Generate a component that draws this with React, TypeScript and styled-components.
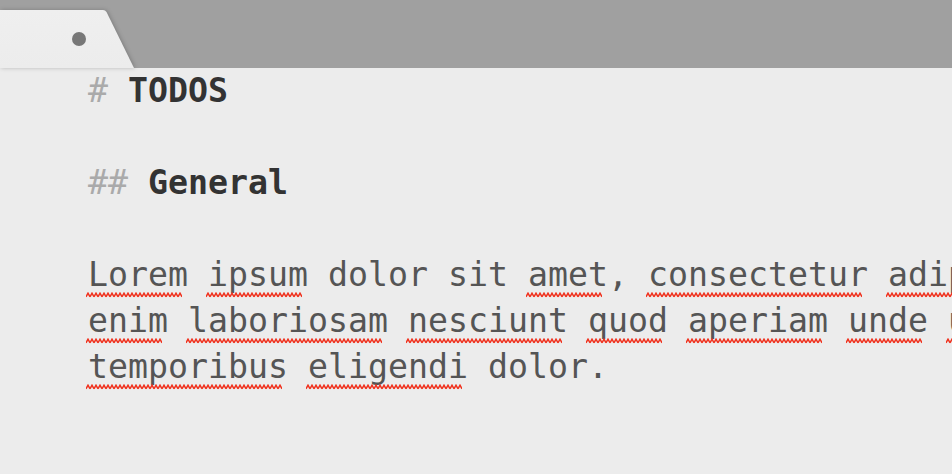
import React from "react";
import styled, { createGlobalStyle } from "styled-components";

const GlobalStyle = createGlobalStyle`
  html, body { margin: 0; padding: 0; background: #ececec; overflow: hidden; }
  body { width: 952px; height: 474px; }
`;

const Window = styled.div`
  width: 952px;
  height: 474px;
  display: flex;
  flex-direction: column;
  background: #ececec;
  overflow: hidden;
`;

const TabBar = styled.div`
  height: 68px;
  flex: none;
  background: #a0a0a0;
  display: flex;
  align-items: flex-end;
`;

const TabShadow = styled.div`
  filter: drop-shadow(1px 0 2px rgba(0, 0, 0, 0.22));
`;

const Tab = styled.div`
  position: relative;
  width: 134px;
  height: 58px;
  background: linear-gradient(#efefef, #ececec);
  clip-path: polygon(0 0, 103px 0, 105px 0.5px, 106.5px 2px, 134px 58px, 0 58px);
`;

const Dot = styled.span`
  position: absolute;
  left: 72px;
  top: 22px;
  width: 14px;
  height: 14px;
  border-radius: 50%;
  background: #777;
`;

const Editor = styled.div`
  flex: 1;
  padding-left: 88px;
  font-family: "DejaVu Sans Mono", "Liberation Mono", monospace;
  font-size: 33.22px;
  line-height: 46px;
  color: #555;
  white-space: pre;
  overflow: hidden;
`;

const Line = styled.div`
  height: 46px;
`;

const Mark = styled.span`
  color: #aaa;
`;

const Heading = styled.span`
  color: #333;
  font-weight: bold;
`;

const squiggle = encodeURIComponent(
  `<svg xmlns="http://www.w3.org/2000/svg" width="4" height="6" viewBox="0 0 4 6"><polyline points="0,4.8 2,1.2 4,4.8" fill="none" stroke="#f0301c" stroke-width="1.5" stroke-linejoin="miter"/></svg>`
);

const Misspelled = styled.span`
  position: relative;
  &::after {
    content: "";
    position: absolute;
    left: -2px;
    right: 6px;
    top: 37px;
    height: 6px;
    background-image: url("data:image/svg+xml,${squiggle}");
    background-repeat: repeat-x;
  }
`;

const W = ({ children }: { children: string }) => <Misspelled>{children}</Misspelled>;

export default function App() {
  return (
    <Window>
      <GlobalStyle />
      <TabBar>
        <TabShadow>
          <Tab>
            <Dot />
          </Tab>
        </TabShadow>
      </TabBar>
      <Editor>
        <Line>
          <Mark>#</Mark> <Heading>TODOS</Heading>
        </Line>
        <Line />
        <Line>
          <Mark>##</Mark> <Heading>General</Heading>
        </Line>
        <Line />
        <Line>
          <W>Lorem</W> <W>ipsum</W> dolor sit <W>amet</W>, <W>consectetur</W> <W>adipisicing</W> elit.
        </Line>
        <Line>
          <W>enim</W> <W>laboriosam</W> <W>nesciunt</W> <W>quod</W> <W>aperiam</W> <W>unde</W> <W>ut</W> quis
        </Line>
        <Line>
          <W>temporibus</W> <W>eligendi</W> dolor.
        </Line>
      </Editor>
    </Window>
  );
}
